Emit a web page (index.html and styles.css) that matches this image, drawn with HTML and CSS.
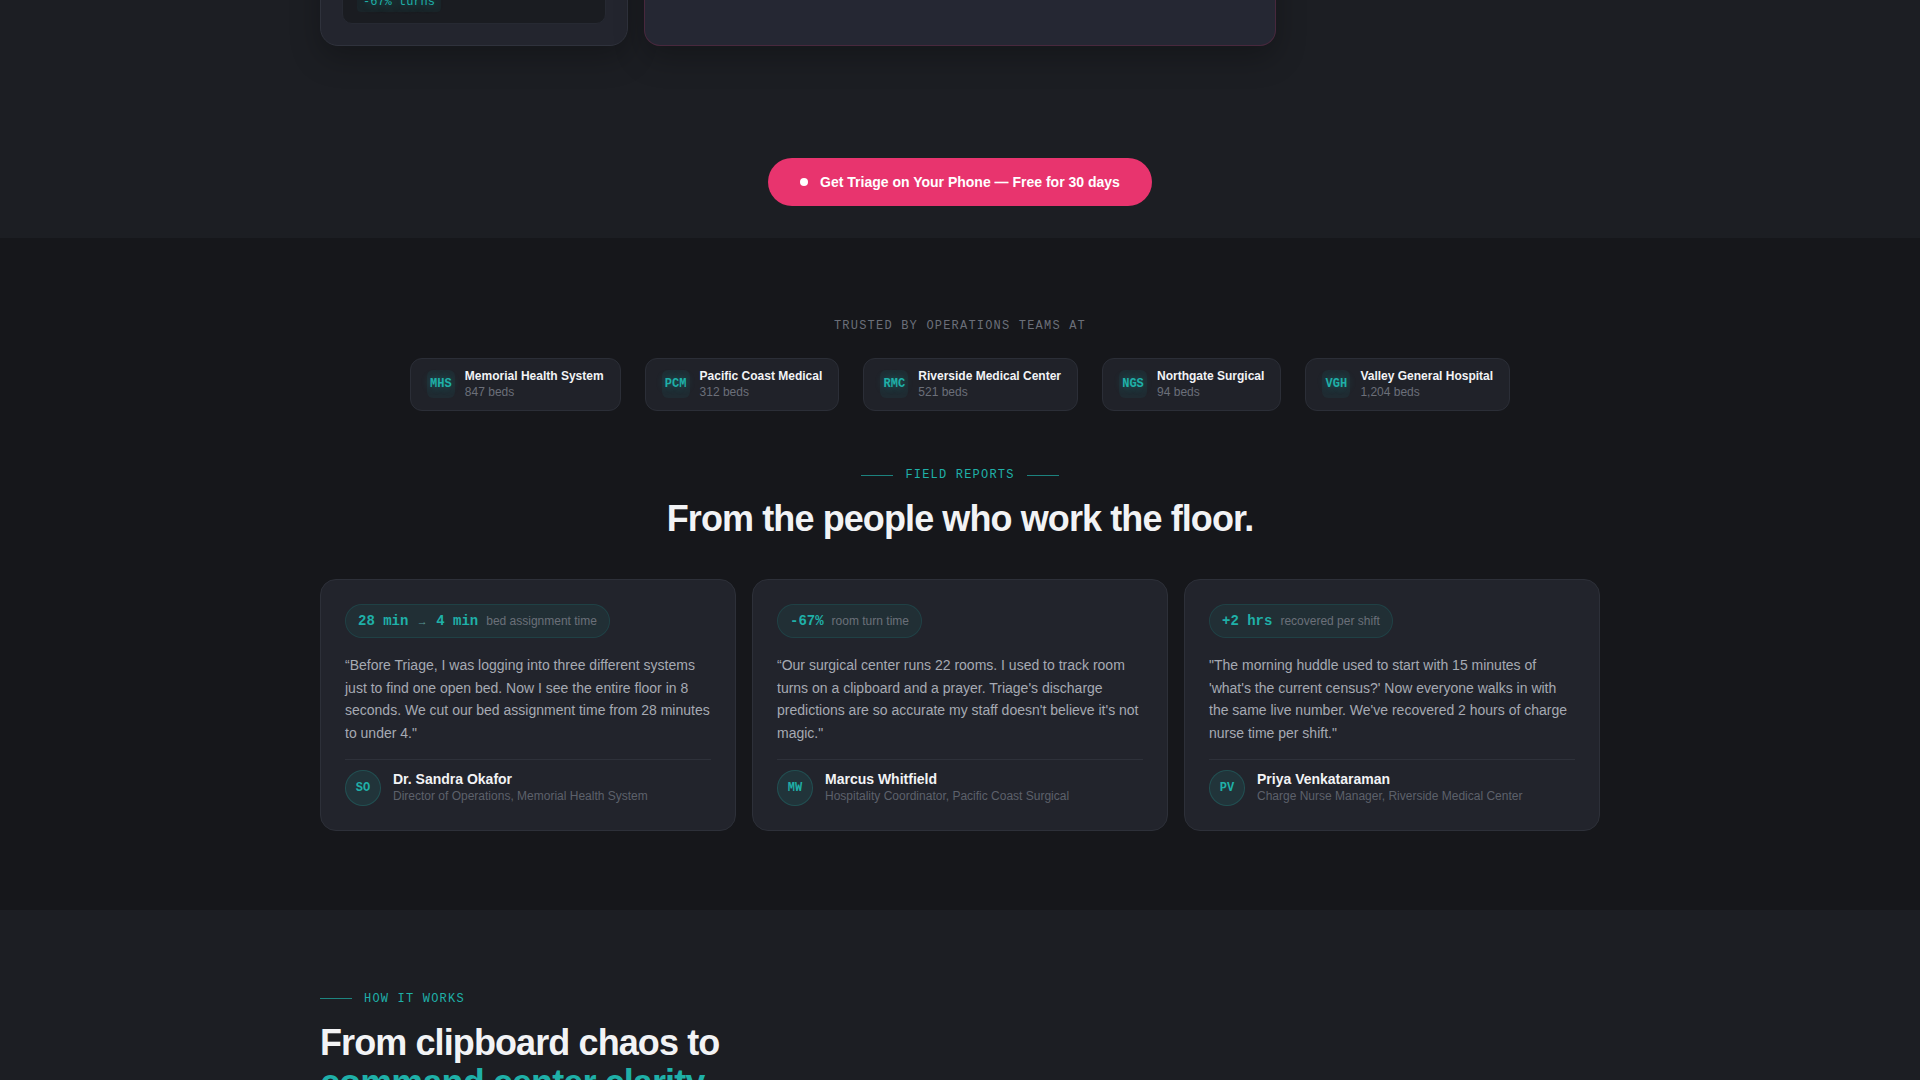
FILE: index.html
```html
<!DOCTYPE html>
<html lang="en">
<head>
<meta charset="utf-8">
<title>Triage — Bed management for hospital operations</title>
<link rel="stylesheet" href="styles.css">
</head>
<body>

<section class="demo">
  <div class="demo-grid">
    <div class="phone-card">
      <div class="phone-screen">
        <span class="screen-tag">-67% turns</span>
      </div>
    </div>
    <div class="board-card"></div>
  </div>

  <div class="cta-row">
    <a class="cta" href="#start"><span class="cta-dot"></span>Get Triage on Your Phone — Free for 30 days</a>
  </div>
</section>

<section class="proof">
  <p class="trusted">TRUSTED BY OPERATIONS TEAMS AT</p>
  <ul class="orgs">
    <li class="org"><span class="org-badge">MHS</span><span class="org-text"><span class="org-name">Memorial Health System</span><span class="org-beds">847 beds</span></span></li>
    <li class="org"><span class="org-badge">PCM</span><span class="org-text"><span class="org-name">Pacific Coast Medical</span><span class="org-beds">312 beds</span></span></li>
    <li class="org"><span class="org-badge">RMC</span><span class="org-text"><span class="org-name">Riverside Medical Center</span><span class="org-beds">521 beds</span></span></li>
    <li class="org"><span class="org-badge">NGS</span><span class="org-text"><span class="org-name">Northgate Surgical</span><span class="org-beds">94 beds</span></span></li>
    <li class="org"><span class="org-badge">VGH</span><span class="org-text"><span class="org-name">Valley General Hospital</span><span class="org-beds">1,204 beds</span></span></li>
  </ul>

  <div class="kicker kicker-center"><span class="kicker-rule"></span>FIELD REPORTS<span class="kicker-rule"></span></div>
  <h2 class="section-title title-center">From the people who work the floor.</h2>

  <div class="reports">
    <article class="report">
      <div class="metric"><span class="metric-val">28 min <span class="metric-arrow">→</span> 4 min</span><span class="metric-label">bed assignment time</span></div>
      <p class="quote">“Before Triage, I was logging into three different systems just to find one open bed. Now I see the entire floor in 8 seconds. We cut our bed assignment time from 28 minutes to under 4."</p>
      <div class="author">
        <span class="avatar">SO</span>
        <span class="author-text"><span class="author-name">Dr. Sandra Okafor</span><span class="author-role">Director of Operations, Memorial Health System</span></span>
      </div>
    </article>
    <article class="report">
      <div class="metric"><span class="metric-val">-67%</span><span class="metric-label">room turn time</span></div>
      <p class="quote">“Our surgical center runs 22 rooms. I used to track room turns on a clipboard and a prayer. Triage's discharge predictions are so accurate my staff doesn't believe it's not magic."</p>
      <div class="author">
        <span class="avatar">MW</span>
        <span class="author-text"><span class="author-name">Marcus Whitfield</span><span class="author-role">Hospitality Coordinator, Pacific Coast Surgical</span></span>
      </div>
    </article>
    <article class="report">
      <div class="metric"><span class="metric-val">+2 hrs</span><span class="metric-label">recovered per shift</span></div>
      <p class="quote">"The morning huddle used to start with 15 minutes of 'what's the current census?' Now everyone walks in with the same live number. We've recovered 2 hours of charge nurse time per shift."</p>
      <div class="author">
        <span class="avatar">PV</span>
        <span class="author-text"><span class="author-name">Priya Venkataraman</span><span class="author-role">Charge Nurse Manager, Riverside Medical Center</span></span>
      </div>
    </article>
  </div>
</section>

<section class="how">
  <div class="kicker"><span class="kicker-rule"></span>HOW IT WORKS</div>
  <h2 class="section-title how-title">From clipboard chaos to<br><span class="accent">command center clarity.</span></h2>
</section>

</body>
</html>
```

FILE: styles.css
```css
:root {
  --bg: #1c1e23;
  --bg-deep: #16171b;
  --card: #22242c;
  --card-border: #2d3039;
  --teal: #1fb0a8;
  --pink: #e8346e;
  --text: #f2f3f5;
  --body: #a6aab3;
  --muted: #6b6f79;
  --faint: #5d616b;
  --sans: "Liberation Sans", Arial, sans-serif;
  --mono: "Liberation Mono", "Courier New", monospace;
}

* { box-sizing: border-box; }

html, body {
  margin: 0;
  padding: 0;
}

body {
  background: var(--bg);
  color: var(--text);
  font-family: var(--sans);
  overflow: hidden;
}

/* ---------- product preview + CTA ---------- */

.demo {
  padding-bottom: 32px;
}

/* the preview cards continue above the fold */
.demo-grid {
  width: 1280px;
  margin: -274px auto 0;
  height: 320px;
  display: grid;
  grid-template-columns: 308px 632px;
  gap: 16px;
}

.phone-card {
  background: #23252e;
  border: 1px solid #2f323c;
  border-radius: 18px;
  padding: 21px;
  display: flex;
  flex-direction: column;
  justify-content: flex-end;
  box-shadow: 0 12px 30px rgba(0, 0, 0, 0.25);
}

.phone-screen {
  height: 220px;
  background: #1a1c21;
  border: 1px solid #262932;
  border-radius: 10px;
  padding: 14px 14px 11px;
  display: flex;
  flex-direction: column;
  justify-content: flex-end;
  align-items: flex-start;
}

.screen-tag {
  font-family: var(--mono);
  font-size: 12px;
  line-height: 16px;
  color: var(--teal);
  background: rgba(31, 176, 168, 0.06);
  padding: 2px 6px;
  border-radius: 4px;
  text-shadow: 0 0 8px rgba(31, 176, 168, 0.5);
}

.board-card {
  background: #252733;
  border: 1px solid rgba(232, 52, 110, 0.18);
  border-radius: 16px;
  box-shadow: 0 12px 30px rgba(0, 0, 0, 0.25);
}

.cta-row {
  display: flex;
  justify-content: center;
  margin-top: 112px;
}

.cta {
  display: inline-flex;
  align-items: center;
  gap: 12px;
  height: 48px;
  padding: 0 32px;
  border-radius: 24px;
  background: var(--pink);
  color: #fff;
  font-size: 14px;
  font-weight: 700;
  text-decoration: none;
}

.cta-dot {
  width: 8px;
  height: 8px;
  border-radius: 50%;
  background: #fff;
}

/* ---------- social proof ---------- */

.proof {
  background: var(--bg-deep);
  padding: 80px 0 79px;
}

.trusted {
  margin: 0 0 24px;
  text-align: center;
  font-family: var(--mono);
  font-size: 12px;
  line-height: 16px;
  letter-spacing: 0.1em;
  color: var(--muted);
}

.orgs {
  list-style: none;
  margin: 0;
  padding: 0;
  display: flex;
  justify-content: center;
  gap: 24px;
}

.org {
  height: 53px;
  display: flex;
  align-items: center;
  gap: 10px;
  padding: 0 16px 1px;
  background: #202229;
  border: 1px solid #2b2e37;
  border-radius: 12px;
}

.org-badge {
  width: 28px;
  height: 28px;
  display: flex;
  align-items: center;
  justify-content: center;
  border-radius: 6px;
  background: rgba(31, 176, 168, 0.07);
  font-family: var(--mono);
  font-size: 12px;
  font-weight: 700;
  color: var(--teal);
  text-shadow: 0 0 8px rgba(31, 176, 168, 0.45);
}

.org-text {
  display: flex;
  flex-direction: column;
}

.org-name {
  font-size: 12px;
  line-height: 15.6px;
  font-weight: 700;
  color: var(--text);
}

.org-beds {
  font-size: 12px;
  line-height: 14.4px;
  color: var(--muted);
}

.kicker {
  display: flex;
  align-items: center;
  gap: 12px;
  font-family: var(--mono);
  font-size: 12px;
  line-height: 16px;
  letter-spacing: 0.1em;
  color: var(--teal);
}

.kicker-center {
  justify-content: center;
  margin-top: 56px;
}

.kicker-rule {
  width: 32px;
  height: 1px;
  background: rgba(31, 176, 168, 0.7);
}

.section-title {
  margin: 15px 0 0;
  font-size: 36px;
  line-height: 1.15;
  font-weight: 700;
  letter-spacing: -0.025em;
  color: var(--text);
}

.title-center { text-align: center; }

.reports {
  width: 1280px;
  margin: 40px auto 0;
  display: grid;
  grid-template-columns: repeat(3, 1fr);
  gap: 16px;
}

.report {
  background: var(--card);
  border: 1px solid var(--card-border);
  border-radius: 16px;
  padding: 24px;
  display: flex;
  flex-direction: column;
  align-items: flex-start;
}

.metric {
  height: 34px;
  display: inline-flex;
  align-items: center;
  gap: 8px;
  padding: 0 12px;
  border-radius: 17px;
  background: rgba(31, 176, 168, 0.08);
  border: 1px solid rgba(31, 176, 168, 0.14);
}

.metric-val {
  font-family: var(--mono);
  font-size: 14px;
  font-weight: 700;
  color: var(--teal);
}

.metric-arrow {
  font-family: var(--sans);
  font-size: 11px;
  font-weight: 400;
  color: #5a9a97;
}

.metric-label {
  font-size: 12px;
  color: var(--muted);
}

.quote {
  margin: 16px 0 15px;
  font-size: 14px;
  line-height: 1.6;
  color: var(--body);
}

.author {
  align-self: stretch;
  border-top: 1px solid #2e313a;
  padding-top: 10px;
  display: flex;
  align-items: center;
  gap: 12px;
}

.avatar {
  width: 36px;
  height: 36px;
  flex: none;
  display: flex;
  align-items: center;
  justify-content: center;
  border-radius: 50%;
  background: rgba(31, 176, 168, 0.12);
  border: 1px solid rgba(31, 176, 168, 0.22);
  font-family: var(--mono);
  font-size: 12px;
  font-weight: 700;
  color: var(--teal);
}

.author-text {
  display: flex;
  flex-direction: column;
}

.author-name {
  font-size: 14px;
  line-height: 17px;
  font-weight: 700;
  color: var(--text);
}

.author-role {
  font-size: 12px;
  line-height: 16px;
  color: var(--faint);
}

/* ---------- how it works ---------- */

.how {
  width: 1280px;
  margin: 0 auto;
  padding-top: 81px;
  height: 400px;
}

.how-title {
  margin-top: 16px;
  line-height: 1.1;
}

.accent { color: var(--teal); }
```
